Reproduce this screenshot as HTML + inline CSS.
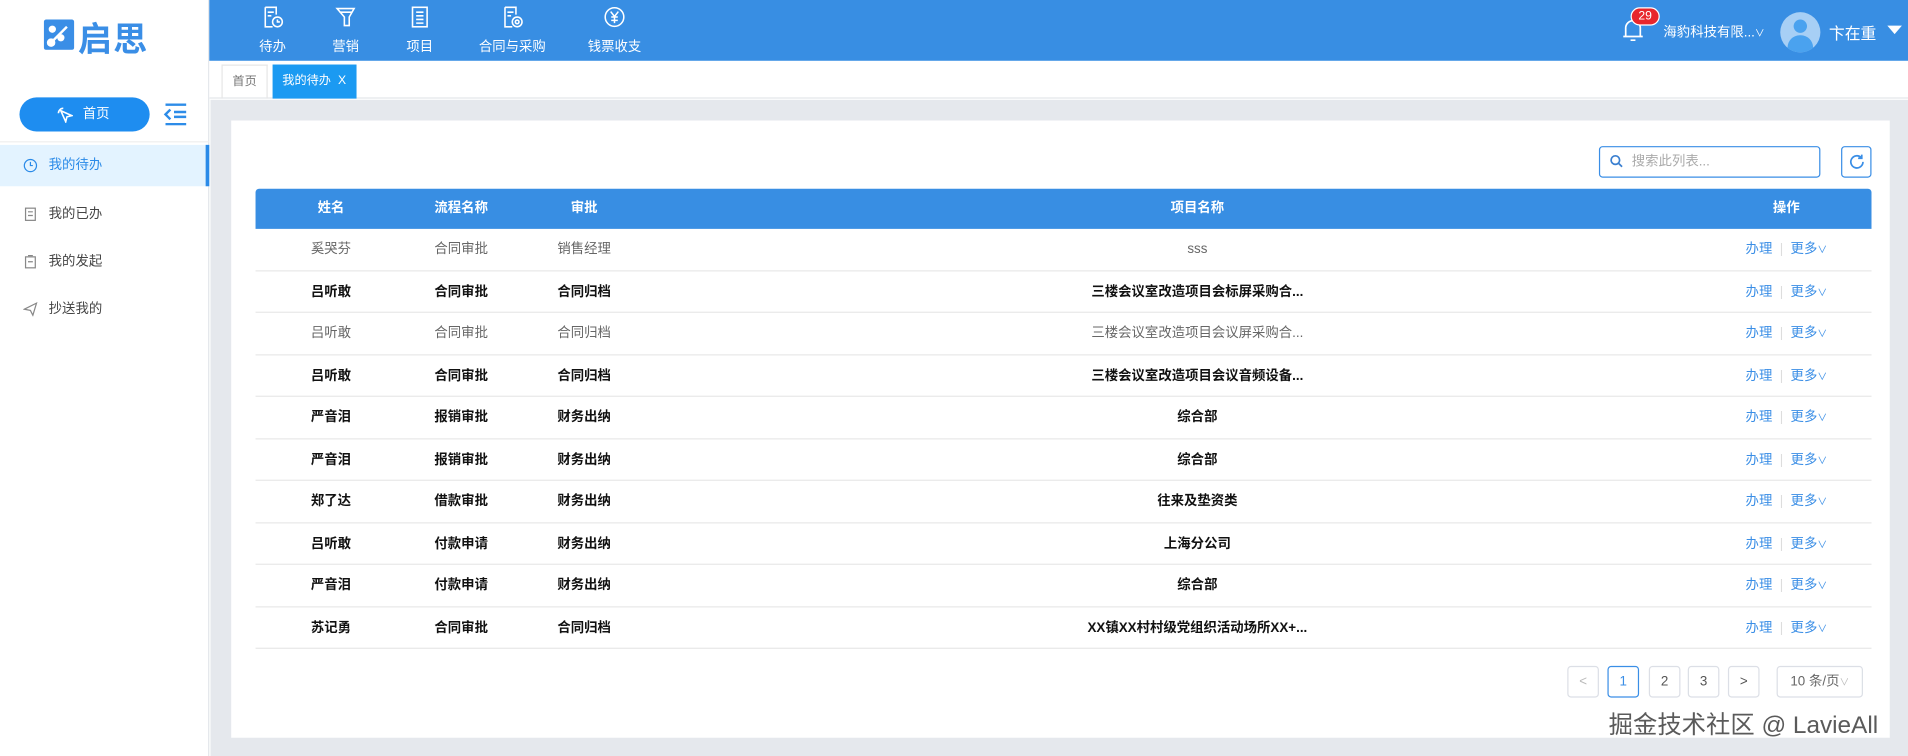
<!DOCTYPE html>
<html><head><meta charset="utf-8"><style>
*{margin:0;padding:0;box-sizing:border-box}
html,body{width:1908px;height:756px;overflow:hidden;background:#fff}
#w{position:absolute;left:0;top:0;width:1568px;height:621px;transform:scale(1.21684,1.2174);transform-origin:0 0;font-family:"Liberation Sans","Noto Sans CJK SC",sans-serif;font-size:11px;color:#333}
.a{position:absolute}
.hdr{left:172px;top:0;width:1396px;height:50px;background:#388ee3}
.nav{top:5px;width:80px;text-align:center;color:#fff;font-size:11px}
.nav svg{display:block;margin:0 auto 7px}
.th{position:absolute;top:155px;height:33px;line-height:33px;color:#fff;font-weight:bold;text-align:center;font-size:11px}
.row{position:absolute;left:210px;width:1328px;height:34.5px;border-bottom:1px solid #e8e8e8;font-size:11px}
.row span{position:absolute;top:0;line-height:34px;text-align:center}
.b span{font-weight:bold;color:#111}
.n span{color:#666}
.row .op{color:#3a8ee6;font-weight:normal;left:1208px;width:100px}
.pg{position:absolute;top:547px;width:26px;height:26px;border:1px solid #dcdfe6;border-radius:3px;text-align:center;line-height:24px;color:#555;background:#fff;font-size:11px}
.side{left:0;width:172px;height:34px;line-height:34px;padding-left:40px;color:#444;font-size:11px}
</style></head><body><div id="w">
<div class="a" style="left:0;top:0;width:172px;height:621px;background:#fff;border-right:1px solid #e3e6ea"></div>
<svg class="a" style="left:36px;top:16px" width="25" height="25" viewBox="0 0 25 25"><rect width="25" height="25" rx="2" fill="#3a8ee6"/><g stroke="#fff" stroke-width="2" fill="#fff"><line x1="6" y1="19" x2="19" y2="6"/><circle cx="6" cy="19" r="2.5"/><circle cx="14" cy="15" r="2"/><circle cx="7" cy="8" r="2"/></g></svg>
<div class="a" style="left:64px;top:11px;font-size:28px;font-weight:bold;color:#3a8ee6;letter-spacing:1px">启思</div>
<div class="a hdr"></div>
<div class="a nav" style="left:184px"><svg width="18" height="18" viewBox="0 0 18 18" fill="none" stroke="#fff" stroke-width="1.3"><path d="M3 1h9v6M3 1v16h6"/><path d="M5 5h5M5 8h3"/><circle cx="13" cy="13" r="4"/><path d="M13 11v2h2"/></svg>待办</div>
<div class="a nav" style="left:244px"><svg width="18" height="18" viewBox="0 0 18 18" fill="none" stroke="#fff" stroke-width="1.3"><path d="M2 2h14l-4 7v7h-4v-7z M4 5h10"/></svg>营销</div>
<div class="a nav" style="left:305px"><svg width="18" height="18" viewBox="0 0 18 18" fill="none" stroke="#fff" stroke-width="1.3"><rect x="3" y="1" width="12" height="16"/><path d="M6 5h6M6 8h6M6 11h6M6 14h6"/></svg>项目</div>
<div class="a nav" style="left:381px"><svg width="18" height="18" viewBox="0 0 18 18" fill="none" stroke="#fff" stroke-width="1.3"><path d="M3 1h9v6M3 1v16h6"/><path d="M5 5h5M5 8h3"/><circle cx="13" cy="13" r="4"/><circle cx="13" cy="13" r="1.5"/></svg>合同与采购</div>
<div class="a nav" style="left:465px"><svg width="18" height="18" viewBox="0 0 20 20" fill="none" stroke="#fff" stroke-width="1.4"><circle cx="10" cy="10" r="8.5"/><path d="M6.5 5l3.5 4.5 3.5-4.5M10 9.5v6M7 10h6M7 13h6"/></svg>钱票收支</div>
<svg class="a" style="left:1333px;top:14px" width="18" height="21" viewBox="0 0 18 21" fill="none" stroke="#fff" stroke-width="1.4"><path d="M3 16V9a6 6 0 0 1 12 0v7zM1 16h16M7 19h4"/></svg>
<div class="a" style="left:1340px;top:6px;width:24px;height:15px;background:#e8262c;border-radius:8px;border:1px solid #fff;color:#fff;font-size:10px;text-align:center;line-height:13px">29</div>
<div class="a" style="left:1367px;top:18px;color:#fff;font-size:11px">海豹科技有限...<span style="font-size:8px">∨</span></div>
<div class="a" style="left:1463px;top:10px;width:33px;height:33px;border-radius:50%;background:#a7cff5;overflow:hidden"><div class="a" style="left:11px;top:6px;width:11px;height:11px;border-radius:50%;background:#4aa2ef"></div><div class="a" style="left:6px;top:19px;width:21px;height:14px;border-radius:10px 10px 0 0;background:#4aa2ef"></div></div>
<div class="a" style="left:1503px;top:17px;color:#fff;font-size:13px">卞在重</div>
<div class="a" style="left:1551px;top:21px;width:0;height:0;border-left:6px solid transparent;border-right:6px solid transparent;border-top:7px solid #fff"></div>
<div class="a" style="left:172px;top:50px;width:1396px;height:31px;background:#fff;border-bottom:1px solid #e3e6ea"></div>
<div class="a" style="left:182px;top:53px;width:38px;height:28px;border:1px solid #e6e6e6;border-bottom:none;color:#777;font-size:10px;text-align:center;line-height:27px">首页</div>
<div class="a" style="left:224px;top:53px;width:69px;height:28px;background:#1b9af2;color:#fff;font-size:10px;line-height:28px;padding-left:8px">我的待办 <span style="margin-left:3px">X</span></div>
<div class="a" style="left:173px;top:82px;width:1395px;height:539px;background:#e5e8ed"></div>
<div class="a" style="left:190px;top:99px;width:1363px;height:507px;background:#fff"></div>
<div class="a" style="left:16px;top:80px;width:107px;height:28px;border-radius:14px;background:#1e8df0;color:#fff;font-size:11px;line-height:28px;padding-left:52px">首页</div>
<svg class="a" style="left:46px;top:87px" width="14" height="14" viewBox="0 0 14 14" fill="none" stroke="#fff" stroke-width="1.3"><path d="M4 4l9 4-4 1-1 4z M2 6a4 4 0 0 1 4-4"/></svg>
<svg class="a" style="left:134px;top:85px" width="20" height="18" viewBox="0 0 20 18" fill="none" stroke="#2d8ce8" stroke-width="2"><path d="M2 1h17M9 7h10M9 11h10M2 17h17M6 5l-4 4 4 4"/></svg>
<div class="a" style="left:0;top:116px;width:172px;height:1px;background:#eee"></div>
<div class="a side" style="top:119px;background:#e3f3ff;color:#2a8ae8;border-right:3px solid #2a8ae8">我的待办</div>
<div class="a side" style="top:159px">我的已办</div>
<div class="a side" style="top:198px">我的发起</div>
<div class="a side" style="top:237px">抄送我的</div>
<svg class="a" style="left:19px;top:130px" width="12" height="12" viewBox="0 0 12 12" fill="none" stroke="#2a8ae8"><circle cx="6" cy="6" r="5"/><path d="M6 3v3h2"/></svg>
<svg class="a" style="left:20px;top:170px" width="10" height="12" viewBox="0 0 10 12" fill="none" stroke="#888"><rect x="1" y="1" width="8" height="10"/><path d="M3 4h4M3 7h4"/></svg>
<svg class="a" style="left:20px;top:209px" width="10" height="12" viewBox="0 0 10 12" fill="none" stroke="#888"><rect x="1" y="2" width="8" height="9"/><path d="M3 1h4M3 6h4"/></svg>
<svg class="a" style="left:19px;top:248px" width="12" height="12" viewBox="0 0 12 12" fill="none" stroke="#888"><path d="M1 6l10-5-3 10-2-4z"/></svg>
<div class="a" style="left:1314px;top:120px;width:182px;height:26px;border:1px solid #3a8ee6;border-radius:3px;color:#aaa;font-size:11px;line-height:24px;padding-left:26px">搜索此列表...</div>
<svg class="a" style="left:1323px;top:127px" width="11" height="11" viewBox="0 0 11 11" fill="none" stroke="#3a7fd0" stroke-width="1.4"><circle cx="4.5" cy="4.5" r="3.5"/><path d="M7 7l3 3"/></svg>
<div class="a" style="left:1513px;top:120px;width:25px;height:26px;border:1px solid #3a8ee6;border-radius:3px"></div>
<svg class="a" style="left:1519px;top:126px" width="14" height="14" viewBox="0 0 14 14" fill="none" stroke="#3a8ee6" stroke-width="1.4"><path d="M12 7a5 5 0 1 1-1.5-3.6M11 1v3h-3"/></svg>
<div class="a" style="left:210px;top:155px;width:1328px;height:33px;background:#388ee3;border-radius:3px 3px 0 0"></div>
<div class="th" style="left:232px;width:80px">姓名</div>
<div class="th" style="left:339px;width:80px">流程名称</div>
<div class="th" style="left:440px;width:80px">审批</div>
<div class="th" style="left:884px;width:200px">项目名称</div>
<div class="th" style="left:1428px;width:80px">操作</div>
<div id="rows"></div>
<div class="pg" style="left:1288px;color:#bbb">&lt;</div>
<div class="pg" style="left:1321px;border-color:#3a8ee6;color:#3a8ee6">1</div>
<div class="pg" style="left:1355px">2</div>
<div class="pg" style="left:1387px">3</div>
<div class="pg" style="left:1420px">&gt;</div>
<div class="pg" style="left:1460px;width:71px;color:#666">10 条/页<span style="color:#bbb;font-size:8px">∨</span></div>
<div class="a" style="left:1322px;top:579px;font-size:20px;color:#5a5a5a;text-shadow:1px 1px 0 #fff,-1px -1px 0 #fff,1px -1px 0 #fff,-1px 1px 0 #fff;white-space:nowrap">掘金技术社区 @ LavieAll</div>
</div>
<script>
var d=[["奚哭芬","合同审批","销售经理","sss",0],["吕听敢","合同审批","合同归档","三楼会议室改造项目会标屏采购合...",1],["吕听敢","合同审批","合同归档","三楼会议室改造项目会议屏采购合...",0],["吕听敢","合同审批","合同归档","三楼会议室改造项目会议音频设备...",1],["严音泪","报销审批","财务出纳","综合部",1],["严音泪","报销审批","财务出纳","综合部",1],["郑了达","借款审批","财务出纳","往来及垫资类",1],["吕听敢","付款申请","财务出纳","上海分公司",1],["严音泪","付款申请","财务出纳","综合部",1],["苏记勇","合同审批","合同归档","XX镇XX村村级党组织活动场所XX+...",1]];
var h="";d.forEach(function(r,i){h+='<div class="row '+(r[4]?'b':'n')+'" style="top:'+(188+i*34.5)+'px"><span style="left:22px;width:80px">'+r[0]+'</span><span style="left:129px;width:80px">'+r[1]+'</span><span style="left:230px;width:80px">'+r[2]+'</span><span style="left:574px;width:400px">'+r[3]+'</span><span class="op">办理 <span style="position:static;color:#ddd;margin:0 3px;font-weight:normal">|</span> 更多<span style="position:static;font-size:8px;color:#3a8ee6;font-weight:normal">∨</span></span></div>'});
document.getElementById("rows").outerHTML=h;
</script>
</body></html>
